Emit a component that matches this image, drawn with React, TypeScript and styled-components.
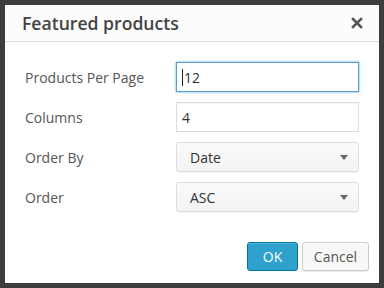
import styled, { createGlobalStyle } from "styled-components";

const Global = createGlobalStyle`
html, body {
    margin: 0;
    padding: 0;
    background: #3d3d3d;
}
body {
    font-family: "Open Sans", "Liberation Sans", sans-serif;
}
`

const Backdrop = styled.div`
width: 384px;
height: 288px;
padding: 5px;
box-sizing: border-box;
background: #3d3d3d;
`

const Dialog = styled.div`
width: 374px;
height: 278px;
background: #fff;
display: flex;
flex-direction: column;
box-sizing: border-box;
`

const Head = styled.div`
height: 37px;
flex: 0 0 auto;
box-sizing: border-box;
background: #fcfcfc;
border-bottom: 1px solid #dddddd;
display: flex;
align-items: center;
justify-content: space-between;
padding: 0 15px 0 17px;
`

const Title = styled.h1`
margin: 0;
font-size: 17.6px;
font-weight: 600;
color: #444;
`

const Close = styled.button`
border: 0;
background: none;
padding: 0;
width: 14px;
height: 14px;
display: flex;
cursor: pointer;
`

const Body = styled.div`
flex: 1 1 auto;
padding: 20px 20px 0 20px;
display: flex;
flex-direction: column;
gap: 10px;
`

const Row = styled.div`
display: grid;
grid-template-columns: 151px 183px;
align-items: center;
height: 30px;
`

const Label = styled.label`
font-size: 14px;
color: #555;
`

const Field = styled.div<{ $focus?: boolean }>`
height: 30px;
box-sizing: border-box;
border: 1px solid ${p => (p.$focus ? "#5b9dd9" : "#dddddd")};
box-shadow: ${p => (p.$focus ? "0 0 2px rgba(30,140,190,0.8)" : "inset 0 1px 2px rgba(0,0,0,0.04)")};
background: #fff;
padding: 0 6px 0 5px;
font-size: 14px;
color: #333;
display: flex;
align-items: center;
`

const Caret = styled.span`
display: inline-block;
width: 1px;
height: 17px;
background: #222;
margin-right: 1px;
`

const Select = styled.div`
height: 30px;
box-sizing: border-box;
border: 1px solid #dddddd;
border-radius: 3px;
background: linear-gradient(#fafafa, #f3f3f3);
box-shadow: 0 1px 0 rgba(0,0,0,0.04);
padding: 0 10px 0 13px;
font-size: 14px;
color: #333;
display: flex;
align-items: center;
justify-content: space-between;
`

const Arrow = styled.span`
width: 0;
height: 0;
border-left: 4px solid transparent;
border-right: 4px solid transparent;
border-top: 5px solid #666;
`

const Foot = styled.div`
flex: 0 0 auto;
display: flex;
justify-content: flex-end;
gap: 4px;
padding: 0 10px 12px 0;
`

const Button = styled.button<{ $primary?: boolean }>`
height: 29px;
box-sizing: border-box;
border-radius: 3px;
font-family: "Open Sans", "Liberation Sans", sans-serif;
font-size: 14px;
padding: 0;
cursor: pointer;
width: ${p => (p.$primary ? "51px" : "67px")};
background: ${p => (p.$primary ? "#2ea2cc" : "#f7f7f7")};
border: 1px solid ${p => (p.$primary ? "#0074a2" : "#cccccc")};
color: ${p => (p.$primary ? "#fff" : "#555")};
box-shadow: ${p => (p.$primary ? "inset 0 1px 0 rgba(120,200,230,0.5)" : "inset 0 1px 0 #fff, 0 1px 0 rgba(0,0,0,0.08)")};
`

const App = () => {
    return (
        <Backdrop>
            <Global />
            <Dialog>
                <Head>
                    <Title>Featured products</Title>
                    <Close aria-label="Close">
                        <svg width="14" height="14" viewBox="0 0 14 14">
                            <path d="M3 3 L11 11 M11 3 L3 11" stroke="#555" strokeWidth="2.6" strokeLinecap="square" />
                        </svg>
                    </Close>
                </Head>
                <Body>
                    <Row>
                        <Label>Products Per Page</Label>
                        <Field $focus><Caret />12</Field>
                    </Row>
                    <Row>
                        <Label>Columns</Label>
                        <Field>4</Field>
                    </Row>
                    <Row>
                        <Label>Order By</Label>
                        <Select>Date<Arrow /></Select>
                    </Row>
                    <Row>
                        <Label>Order</Label>
                        <Select>ASC<Arrow /></Select>
                    </Row>
                </Body>
                <Foot>
                    <Button $primary>OK</Button>
                    <Button>Cancel</Button>
                </Foot>
            </Dialog>
        </Backdrop>
    )
}

export default App;
